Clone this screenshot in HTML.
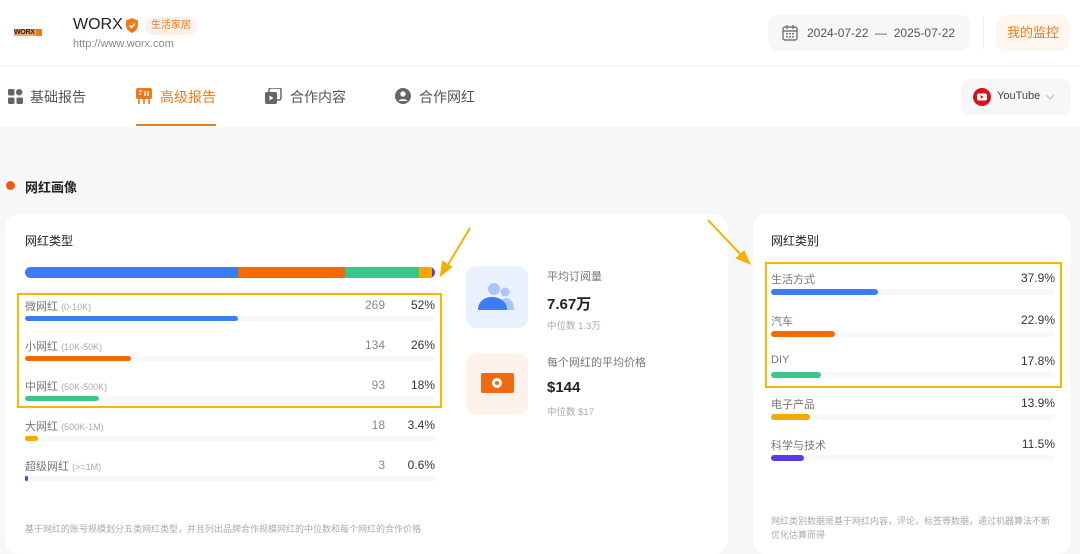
<!DOCTYPE html>
<html><head><meta charset="utf-8"><style>
*{margin:0;padding:0;box-sizing:border-box}
body{width:1080px;height:548px;overflow:hidden;background:#f6f7f9;font-family:"Liberation Sans","Noto Sans CJK SC",sans-serif;position:relative;color:#333}
.a{position:absolute}
.top{left:0;top:0;width:1080px;height:127px;background:#fff}
.card{background:#fff;border-radius:14px}
.lbl{font-size:11px;color:#777}
.lbl small{font-size:9px;color:#aaa}
.num{font-size:12px;color:#888;text-align:right;width:40px}
.pct{font-size:12px;color:#333;text-align:right;width:50px}
.bar{height:5px;border-radius:3px}
.trk{height:5px;border-radius:3px;background:#f7f8fa}
</style></head><body>
<div class="a top"></div>
<div class="a" style="left:14px;top:29px;width:28px;height:7px;background:#f07a1a"></div>
<div class="a" style="left:14px;top:29px;width:22px;height:7px;background:#f7a35a"></div>
<div class="a" style="left:14px;top:28px;font:bold 7px/9px 'Liberation Sans';color:#222;letter-spacing:-0.3px">WORX</div>
<div class="a" style="left:73px;top:16px;font-size:16px;color:#222">WORX</div>
<svg class="a" style="left:125px;top:18px" width="14" height="15" viewBox="0 0 14 15"><path d="M7 0L13 2.5V7.5C13 11 10 13.5 7 15C4 13.5 1 11 1 7.5V2.5Z" fill="#f07a1a"/><path d="M4.5 7.5L6.5 9.3L9.8 5.8" stroke="#fff" stroke-width="1.5" fill="none"/></svg>
<div class="a" style="left:145px;top:17px;height:18px;padding:0 6px;border-radius:9px;background:#fdf0e8;color:#f07a1a;font-size:10px;line-height:18px">生活家居</div>
<div class="a" style="left:73px;top:38px;font-size:11px;color:#888">http://www.worx.com</div>
<div class="a" style="left:768px;top:15px;width:202px;height:36px;border-radius:10px;background:#f6f7f9"></div>
<svg class="a" style="left:782px;top:25px" width="16" height="16" viewBox="0 0 16 16"><rect x="1" y="2" width="14" height="13" rx="2" fill="none" stroke="#777" stroke-width="1.4"/><path d="M1 6H15M5 0V4M11 0V4" stroke="#777" stroke-width="1.4"/><g fill="#777"><rect x="4" y="8" width="2" height="1.5"/><rect x="7" y="8" width="2" height="1.5"/><rect x="10" y="8" width="2" height="1.5"/><rect x="4" y="11" width="2" height="1.5"/><rect x="7" y="11" width="2" height="1.5"/><rect x="10" y="11" width="2" height="1.5"/></g></svg>
<div class="a" style="left:807px;top:26px;font-size:12px;color:#555">2024-07-22 &nbsp;—&nbsp; 2025-07-22</div>
<div class="a" style="left:983px;top:17px;width:1px;height:32px;background:#eee"></div>
<div class="a" style="left:996px;top:15px;width:74px;height:36px;border-radius:10px;background:#fef6ef;color:#f07a1a;font-size:13px;line-height:36px;text-align:center">我的监控</div>
<div class="a" style="left:0;top:66px;width:1080px;height:1px;background:#f3f3f3"></div>
<svg class="a" style="left:8px;top:89px" width="15" height="15" viewBox="0 0 15 15" fill="#666"><rect x="0" y="0" width="6.5" height="6.5" rx="1.5"/><circle cx="11.2" cy="3.2" r="3.2"/><rect x="0" y="8.5" width="6.5" height="6.5" rx="1.5"/><rect x="8.5" y="8.5" width="6.5" height="6.5" rx="1.5"/></svg>
<div class="a" style="left:30px;top:87px;font-size:14px;color:#555">基础报告</div>
<svg class="a" style="left:135px;top:87px" width="18" height="18" viewBox="0 0 18 18"><rect x="1" y="1" width="16" height="11" rx="2" fill="#f07a1a"/><path d="M4 4H7M4 7H6M10 4V9M13 4V9" stroke="#fff" stroke-width="1.3"/><path d="M4 12V17M9 12V17M14 12V17" stroke="#f07a1a" stroke-width="1.6"/></svg>
<div class="a" style="left:160px;top:87px;font-size:14px;color:#f07a1a">高级报告</div>
<div class="a" style="left:136px;top:124px;width:80px;height:2px;background:#f07a1a"></div>
<svg class="a" style="left:265px;top:88px" width="17" height="17" viewBox="0 0 17 17"><rect x="4" y="0" width="12" height="12" rx="2" fill="none" stroke="#666" stroke-width="1.5"/><rect x="0" y="4" width="12" height="12" rx="2" fill="#666"/><path d="M4.5 7.5V12.5L8.5 10Z" fill="#fff"/></svg>
<div class="a" style="left:290px;top:87px;font-size:14px;color:#555">合作内容</div>
<svg class="a" style="left:395px;top:88px" width="16" height="16" viewBox="0 0 16 16"><circle cx="8" cy="8" r="8" fill="#666"/><circle cx="8" cy="6" r="2.7" fill="#fff"/><path d="M3.5 13C4.5 10.5 11.5 10.5 12.5 13" fill="#fff"/></svg>
<div class="a" style="left:419px;top:87px;font-size:14px;color:#555">合作网红</div>
<div class="a" style="left:961px;top:79px;width:110px;height:36px;border-radius:10px;background:#f6f7f9"></div>
<svg class="a" style="left:973px;top:88px" width="18" height="18" viewBox="0 0 18 18"><circle cx="9" cy="9" r="9" fill="#d8101c"/><rect x="4" y="5.5" width="10" height="7" rx="2" fill="#fff"/><path d="M7.7 7.3V10.7L10.6 9Z" fill="#d8101c"/></svg>
<div class="a" style="left:997px;top:90px;font-size:11px;color:#444">YouTube</div>
<svg class="a" style="left:1045px;top:94px" width="10" height="6"><path d="M1 1L5 5L9 1" stroke="#bbb" fill="none"/></svg>
<div class="a" style="left:6px;top:181px;width:9px;height:9px;border-radius:50%;background:#f05a14"></div>
<div class="a" style="left:25px;top:177px;font-size:13px;color:#222;font-weight:bold">网红画像</div>
<div class="a card" style="left:5px;top:214px;width:723px;height:340px"></div>
<div class="a card" style="left:753px;top:214px;width:318px;height:340px"></div>
<div class="a" style="left:25px;top:232px;font-size:12px;color:#222">网红类型</div>
<div class="a" style="left:25px;top:267px;width:410px;height:11px;border-radius:6px;overflow:hidden;display:flex">
<div style="width:213px;background:#3b7df7"></div><div style="width:107px;background:#f56a00"></div><div style="width:74px;background:#39c88a"></div><div style="width:13px;background:#f5a800"></div><div style="width:3px;background:#5b3be6"></div></div>
<div class="a" style="left:25px;top:298px;width:410px">
<div style="position:relative;height:40px"><div class="a lbl" style="left:0;top:0">微网红 <small>(0-10K)</small></div><div class="a num" style="left:320px;top:0">269</div><div class="a pct" style="left:360px;top:0">52%</div><div class="a trk" style="left:0;top:18px;width:410px"></div><div class="a bar" style="left:0;top:18px;width:213px;background:#3b7df7"></div></div>
<div style="position:relative;height:40px"><div class="a lbl" style="left:0;top:0">小网红 <small>(10K-50K)</small></div><div class="a num" style="left:320px;top:0">134</div><div class="a pct" style="left:360px;top:0">26%</div><div class="a trk" style="left:0;top:18px;width:410px"></div><div class="a bar" style="left:0;top:18px;width:106px;background:#f56a00"></div></div>
<div style="position:relative;height:40px"><div class="a lbl" style="left:0;top:0">中网红 <small>(50K-500K)</small></div><div class="a num" style="left:320px;top:0">93</div><div class="a pct" style="left:360px;top:0">18%</div><div class="a trk" style="left:0;top:18px;width:410px"></div><div class="a bar" style="left:0;top:18px;width:74px;background:#39c88a"></div></div>
<div style="position:relative;height:40px"><div class="a lbl" style="left:0;top:0">大网红 <small>(500K-1M)</small></div><div class="a num" style="left:320px;top:0">18</div><div class="a pct" style="left:360px;top:0">3.4%</div><div class="a trk" style="left:0;top:18px;width:410px"></div><div class="a bar" style="left:0;top:18px;width:13px;background:#f5a800"></div></div>
<div style="position:relative;height:40px"><div class="a lbl" style="left:0;top:0">超级网红 <small>(&gt;=1M)</small></div><div class="a num" style="left:320px;top:0">3</div><div class="a pct" style="left:360px;top:0">0.6%</div><div class="a trk" style="left:0;top:18px;width:410px"></div><div class="a bar" style="left:0;top:18px;width:3px;background:#5b3be6"></div></div>
</div>
<div class="a" style="left:17px;top:293px;width:425px;height:115px;border:2px solid #f5b800"></div>
<div class="a" style="left:25px;top:522px;font-size:9px;color:#aaa">基于网红的账号规模划分五类网红类型，并且列出品牌合作规模网红的中位数和每个网红的合作价格</div>
<div class="a" style="left:466px;top:266px;width:62px;height:62px;border-radius:10px;background:#eaf1fe"></div>
<svg class="a" style="left:478px;top:282px" width="40" height="32" viewBox="0 0 40 32"><circle cx="27" cy="10" r="4.5" fill="#a9c5fb"/><path d="M20 28C20 20 24 16 28 16C33 16 36 21 36 28Z" fill="#a9c5fb"/><circle cx="16" cy="7" r="6" fill="#a9c5fb"/><path d="M0 28C0 19 7 15 14 15C21 15 29 19 29 28Z" fill="#3b7df7"/></svg>
<div class="a" style="left:547px;top:268px;font-size:11px;color:#777">平均订阅量</div>
<div class="a" style="left:547px;top:293px;font-size:15px;color:#222;font-weight:bold">7.67万</div>
<div class="a" style="left:547px;top:318px;font-size:9.5px;color:#aaa">中位数 1.3万</div>
<div class="a" style="left:466px;top:353px;width:62px;height:62px;border-radius:10px;background:#fef2ea"></div>
<div class="a" style="left:481px;top:373px;width:33px;height:20px;border-radius:2px;background:#f06a10"></div>
<div class="a" style="left:492px;top:378px;width:10px;height:10px;border-radius:50%;border:3px solid #fff"></div>
<div class="a" style="left:547px;top:354px;font-size:11px;color:#777">每个网红的平均价格</div>
<div class="a" style="left:547px;top:379px;font-size:15px;color:#222;font-weight:bold">$144</div>
<div class="a" style="left:547px;top:404px;font-size:9.5px;color:#aaa">中位数 $17</div>
<div class="a" style="left:771px;top:232px;font-size:12px;color:#222">网红类别</div>
<div class="a" style="left:771px;top:271px;width:284px">
<div style="position:relative;height:41.5px"><div class="a lbl" style="left:0;top:0">生活方式</div><div class="a pct" style="right:0;top:0">37.9%</div><div class="a trk" style="left:0;top:18px;width:284px;height:6px"></div><div class="a bar" style="left:0;top:18px;width:107px;height:6px;background:#3b7df7"></div></div>
<div style="position:relative;height:41.5px"><div class="a lbl" style="left:0;top:0">汽车</div><div class="a pct" style="right:0;top:0">22.9%</div><div class="a trk" style="left:0;top:18px;width:284px;height:6px"></div><div class="a bar" style="left:0;top:18px;width:64px;height:6px;background:#f56a00"></div></div>
<div style="position:relative;height:41.5px"><div class="a lbl" style="left:0;top:0">DIY</div><div class="a pct" style="right:0;top:0">17.8%</div><div class="a trk" style="left:0;top:18px;width:284px;height:6px"></div><div class="a bar" style="left:0;top:18px;width:50px;height:6px;background:#39c88a"></div></div>
<div style="position:relative;height:41.5px"><div class="a lbl" style="left:0;top:0">电子产品</div><div class="a pct" style="right:0;top:0">13.9%</div><div class="a trk" style="left:0;top:18px;width:284px;height:6px"></div><div class="a bar" style="left:0;top:18px;width:39px;height:6px;background:#f5a800"></div></div>
<div style="position:relative;height:41.5px"><div class="a lbl" style="left:0;top:0">科学与技术</div><div class="a pct" style="right:0;top:0">11.5%</div><div class="a trk" style="left:0;top:18px;width:284px;height:6px"></div><div class="a bar" style="left:0;top:18px;width:33px;height:6px;background:#5b3be6"></div></div>
</div>
<div class="a" style="left:765px;top:262px;width:297px;height:126px;border:2px solid #f5b800"></div>
<div class="a" style="left:771px;top:514px;width:285px;font-size:9px;color:#aaa;line-height:14px">网红类别数据是基于网红内容，评论，标签等数据，通过机器算法不断优化估算而得</div>
<svg class="a" style="left:0;top:0" width="1080" height="548"><g stroke="#f5b000" stroke-width="2" fill="#f5b000"><line x1="470" y1="228" x2="446" y2="268"/><path d="M441 275L443 262L451 267Z"/><line x1="708" y1="220" x2="743" y2="257"/><path d="M749 263L737 258L744 252Z"/></g></svg>
</body></html>
